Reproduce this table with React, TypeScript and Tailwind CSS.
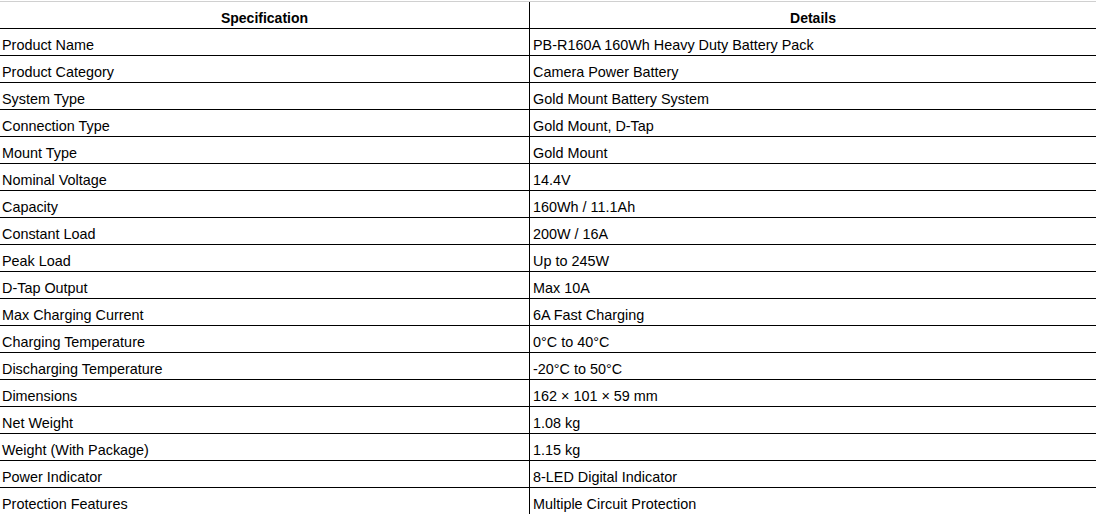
const specs: [string, string][] = [
  ["Product Name", "PB-R160A 160Wh Heavy Duty Battery Pack"],
  ["Product Category", "Camera Power Battery"],
  ["System Type", "Gold Mount Battery System"],
  ["Connection Type", "Gold Mount, D-Tap"],
  ["Mount Type", "Gold Mount"],
  ["Nominal Voltage", "14.4V"],
  ["Capacity", "160Wh / 11.1Ah"],
  ["Constant Load", "200W / 16A"],
  ["Peak Load", "Up to 245W"],
  ["D-Tap Output", "Max 10A"],
  ["Max Charging Current", "6A Fast Charging"],
  ["Charging Temperature", "0°C to 40°C"],
  ["Discharging Temperature", "-20°C to 50°C"],
  ["Dimensions", "162 × 101 × 59 mm"],
  ["Net Weight", "1.08 kg"],
  ["Weight (With Package)", "1.15 kg"],
  ["Power Indicator", "8-LED Digital Indicator"],
  ["Protection Features", "Multiple Circuit Protection"],
];

export default function App() {
  return (
    <div className="min-h-screen bg-white text-black font-['Liberation_Sans',Arial,sans-serif] text-[14.4px] leading-[16px]">
      <div className="mt-px border-t border-[#d0d0d0] grid grid-cols-[530px_1fr]">
        {/* Header */}
        <div className="h-[27px] border-r border-b border-black pt-[8px] pb-[2px] text-center text-[14px] font-bold">
          Specification
        </div>
        <div className="h-[27px] border-b border-black pt-[8px] pb-[2px] text-center text-[14px] font-bold">
          Details
        </div>

        {/* Rows */}
        {specs.map(([name, value]) => (
          <div key={name} className="contents">
            <div className="h-[27px] border-r border-b border-black pl-[2px] pt-[8px] pb-[2px] whitespace-nowrap">
              {name}
            </div>
            <div className="h-[27px] border-b border-black pl-[3px] pt-[8px] pb-[2px] whitespace-nowrap">
              {value}
            </div>
          </div>
        ))}
      </div>
    </div>
  );
}
